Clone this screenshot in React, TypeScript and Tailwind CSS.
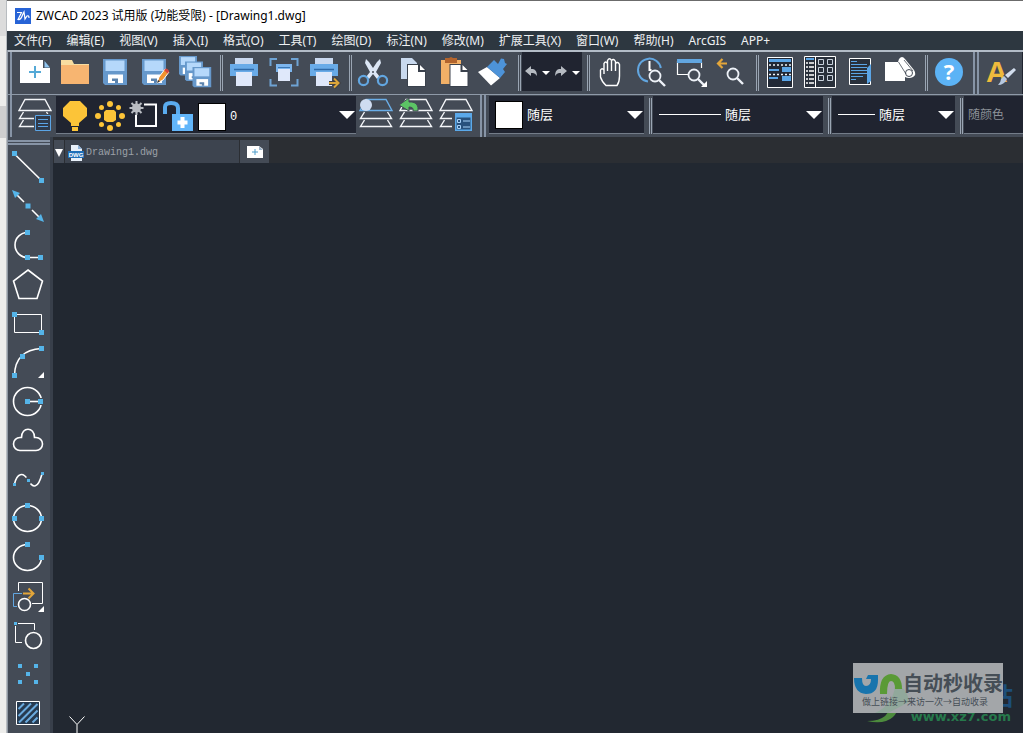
import type { ReactNode } from 'react';

const CJK = "font-['Noto_Sans','Noto_Sans_CJK_SC',sans-serif]";

const menus = [
  '文件(F)', '编辑(E)', '视图(V)', '插入(I)', '格式(O)', '工具(T)', '绘图(D)',
  '标注(N)', '修改(M)', '扩展工具(X)', '窗口(W)', '帮助(H)', 'ArcGIS', 'APP+',
];

interface IconProps {
  children: ReactNode;
}

// Toolbar glyphs are drawn on a 40x42 grid, one per button cell.
function Icon({ children }: IconProps) {
  return (
    <svg className="block h-[42px] w-10" viewBox="0 0 40 42" fill="none" aria-hidden="true">
      {children}
    </svg>
  );
}

function ToolButton({ label, children }: { label: string; children: ReactNode }) {
  return (
    <button type="button" aria-label={label} className="shrink-0 hover:bg-white/10">
      <Icon>{children}</Icon>
    </button>
  );
}

function Separator() {
  return (
    <div className="flex w-[9px] shrink-0 justify-end gap-px py-[3px] pr-px">
      <div className="w-px bg-[#9aa5b3]" />
      <div className="w-px bg-[#9aa5b3]" />
    </div>
  );
}

function Grip() {
  return (
    <div className="flex w-[13px] shrink-0 justify-center gap-0.5">
      <div className="w-0.5 bg-[#8794a6]" />
      <div className="w-0.5 bg-[#8794a6]" />
    </div>
  );
}

function Floppy({ x, y, s = 1 }: { x: number; y: number; s?: number }) {
  return (
    <g transform={`translate(${x} ${y}) scale(${s})`}>
      <path d="M0 0H24V26H2L0 24Z" fill="#6698cb" />
      <path d="M2.500 1.500H21.500V12H2.500Z" fill="#b5d8fb" />
      <path d="M5 15.500H20V24H5Z" fill="#fff" />
      <path d="M9 19.500H15V24H12V22H9Z" fill="#5b83ad" />
    </g>
  );
}

function Printer() {
  return (
    <>
      <path d="M11 6H29V13H11Z" fill="#c9d8ef" />
      <path d="M6 12H34V24H6Z" fill="#69abe8" />
      <path d="M10 17.500H30" stroke="#2f6aa8" strokeWidth="1.500" />
      <path d="M12 20H28V34H12Z" fill="#dfe8fa" />
    </>
  );
}

function FrontPage({ x }: { x: number }) {
  return (
    <g transform={`translate(${x} 13)`}>
      <path d="M-1 -1H12L18 5V22H-1Z" fill="#3a414c" />
      <path d="M0 0H10V7H17V21H0Z" fill="#fff" />
      <path d="M12 0L17 5H12Z" fill="#fff" />
    </g>
  );
}

function Magnifier({ x, y }: { x: number; y: number }) {
  return (
    <g stroke="#eef2f8" strokeWidth="1.8">
      <circle cx={x} cy={y} r="5.500" fill="#444b56" />
      <path d={`M${x + 4} ${y + 4}L${x + 10} ${y + 10}`} strokeWidth="2.400" />
    </g>
  );
}

function Layers({ top = '#f4f6f9' }: { top?: string }) {
  return (
    <g stroke="#f4f6f9" strokeWidth="1.400">
      <path d="M10 4.500H30L36 15.500H4Z" stroke={top} />
      <path d="M8.500 17L4.500 23.500H35.500L31.500 17" />
      <path d="M8.500 25L4.500 31.500H35.500L31.500 25" />
    </g>
  );
}

function FileTools() {
  return (
    <>
      <ToolButton label="新建">
        <path d="M5 8H28V16H35V31H5Z" fill="#fff" />
        <path d="M29.500 9L35 15.500H29.500Z" fill="#8fc4ee" />
        <path d="M20 14V26M14 20H26" stroke="#55a9d6" strokeWidth="2" />
      </ToolButton>
      <ToolButton label="打开">
        <path d="M6 8H17L19 12H34V20H6Z" fill="#f8dda0" />
        <path d="M6 13H34V32H6Z" fill="#f7b571" />
      </ToolButton>
      <ToolButton label="保存">
        <Floppy x={8} y={7} />
      </ToolButton>
      <ToolButton label="另存为">
        <Floppy x={7} y={7} />
        <path d="M22 31L24 25L30 17L34 20L28 28Z" fill="#f0932e" stroke="#fff" />
        <path d="M29 18L31 16.500Q34 17 34 20L32.500 21.500Z" fill="#d8463c" />
        <path d="M22 31L23 28L25 29.500Z" fill="#333" />
      </ToolButton>
      <ToolButton label="全部保存">
        <Floppy x={4} y={4} s={0.75} />
        <Floppy x={10} y={9.500} s={0.75} />
        <Floppy x={17.500} y={15} s={0.78} />
      </ToolButton>
    </>
  );
}

function PrintTools() {
  return (
    <>
      <ToolButton label="打印">
        <Printer />
      </ToolButton>
      <ToolButton label="打印预览">
        <path
          d="M6.500 14V7H13M27 7H33.500V14M33.500 27V33.500H27M13 33.500H6.500V27"
          stroke="#6ea3d4"
          strokeWidth="2"
        />
        <path d="M12 12H28V20H12Z" fill="#7db6ee" />
        <path d="M14 15.500H26" stroke="#3a77b5" />
        <path d="M14 17H26V29H14Z" fill="#dfe8fa" />
      </ToolButton>
      <ToolButton label="发布">
        <Printer />
        <path d="M25 31H34M30 26.500L34.500 31L30 35.500" stroke="#3f4046" strokeWidth="4" />
        <path d="M25 31H34M30 26.500L34.500 31L30 35.500" stroke="#dba63b" strokeWidth="2" />
      </ToolButton>
    </>
  );
}

function EditTools() {
  return (
    <>
      <ToolButton label="剪切">
        <path d="M13 7L16 10L20 16L24 10L27 7L28 11L23 20L27 25L24 27L20 22L16 27L13 25L17 20L12 11Z" fill="#dce6f5" />
        <circle cx="10.500" cy="28.500" r="4.600" stroke="#62a6e0" strokeWidth="2.200" />
        <circle cx="29.500" cy="28.500" r="4.600" stroke="#62a6e0" strokeWidth="2.200" />
        <circle cx="20" cy="20" r="1" fill="#444b56" />
      </ToolButton>
      <ToolButton label="复制">
        <path d="M8 6H19L24 11V27H8Z" fill="#c9d9ee" />
        <FrontPage x={15} />
      </ToolButton>
      <ToolButton label="粘贴">
        <path d="M8 8H28V32H8Z" fill="#f2b067" />
        <path d="M12 6H16L18 5L20 6H24V11H12Z" fill="#b2642d" />
        <FrontPage x={17.500} />
      </ToolButton>
      <ToolButton label="格式刷">
        <path d="M5 20L14 15L27 26L18 33.500Z" fill="#fff" />
        <path d="M14 15L21 8L25 12L28 6.500L31 7L32 11L34 12L30 17L32 20L27 26Z" fill="#4d93d9" />
      </ToolButton>
    </>
  );
}

function HistoryTools() {
  return (
    <div className="flex h-[39px] w-[60px] shrink-0 items-center bg-[#202430]">
      <button type="button" aria-label="放弃" className="flex-1">
        <svg className="block h-4 w-[30px]" viewBox="0 0 30 16" aria-hidden="true">
          <path d="M3 7L9 2V5H11Q15 6 15 12Q13 9 11 9H9V12Z" fill="#b5bac1" />
          <path d="M20 7H28L24 11Z" fill="#fff" />
        </svg>
      </button>
      <button type="button" aria-label="重做" className="flex-1">
        <svg className="block h-4 w-[30px]" viewBox="0 0 30 16" aria-hidden="true">
          <path d="M15 7L9 2V5H7Q3 6 3 12Q5 9 7 9H9V12Z" fill="#b5bac1" />
          <path d="M20 7H28L24 11Z" fill="#fff" />
        </svg>
      </button>
    </div>
  );
}

function ViewTools() {
  return (
    <>
      <ToolButton label="平移">
        <path
          d="M13 22V11.500Q14.500 8.500 16.500 11.500V19M16.500 19V8.500Q18.500 5 20.500 8.500V19M20.500 19V8.500Q22.500 6 24.500 9.500V19M24.500 19V11.500Q27 9 28.500 12.500V24Q28.500 30 26 33.500H15Q10.500 29 9.500 25V18Q11 15.500 13 18"
          stroke="#fff"
          strokeWidth="1.400"
        />
      </ToolButton>
      <ToolButton label="实时缩放">
        <path d="M17 29.500A11.500 11.500 0 1 1 29.800 16" stroke="#62a6e0" strokeWidth="2" />
        <path d="M18.500 9V18H20.500" stroke="#fff" strokeWidth="2" />
        <Magnifier x={24} y={24} />
      </ToolButton>
      <ToolButton label="窗口缩放">
        <path d="M17 22.500H6.500V9M30.500 10V16" stroke="#fff" strokeWidth="1.200" />
        <path d="M6 7H31V11H6Z" fill="#62a6e0" />
        <Magnifier x={23} y={23} />
        <path d="M36 29V35H30Z" fill="#fff" />
      </ToolButton>
      <ToolButton label="缩放上一个">
        <path d="M7 11.500H16M11.500 7L7 11.500L11.500 16" stroke="#e3a63a" strokeWidth="2.200" />
        <Magnifier x={22} y={22} />
      </ToolButton>
    </>
  );
}

function PaletteTools() {
  return (
    <>
      <ToolButton label="特性">
        <path d="M7.500 5.500H32.500V35.500H7.500Z" fill="#222936" stroke="#fff" />
        <path d="M9 7H31V10H9ZM22 15H31V20H22ZM9 17H19V19H9ZM22 24H31V29H22ZM9 25H18V27H9Z" fill="#5ba5e6" />
        <path d="M9 13H31M9 22.500H31" stroke="#eef3f8" strokeWidth="1.500" strokeDasharray="2 2" />
      </ToolButton>
      <ToolButton label="设计中心">
        <path d="M4.500 4.500H35.500V35.500H4.500ZM15.500 4.500V35.500" fill="#29303b" stroke="#fff" />
        <path d="M6 7H14" stroke="#5ba5e6" strokeWidth="2" />
        <path d="M6 11H14M6 15H14M6 19H14M6 23H14M6 27H14M6 31H14" stroke="#fff" strokeWidth="1.500" strokeDasharray="2 1 6" />
        <path
          d="M18.500 7.500H23.500V12.500H18.500ZM27.500 7.500H32.500V12.500H27.500ZM18.500 15.500H23.500V20.500H18.500ZM27.500 15.500H32.500V20.500H27.500ZM18.500 23.500H23.500V28.500H18.500ZM27.500 23.500H32.500V28.500H27.500Z"
          stroke="#c9d2dd"
        />
      </ToolButton>
      <ToolButton label="工具选项板">
        <path d="M9.500 6.500H30.500V32.500H9.500Z" fill="#29303b" stroke="#fff" />
        <path
          d="M11 9.500H17M11 12.500H27M11 15.500H27M11 18.500H27M11 21.500H27M11 24.500H23M11 27.500H16"
          stroke="#5ba5e6"
        />
        <path d="M27 16L31 12V29L27 32Z" fill="#5ba5e6" />
      </ToolButton>
      <ToolButton label="图纸集">
        <path d="M5 10H18L19 7Q22 3 25 7L34 18Q37 23 33 25Q29 27 25 25V29H5Z" fill="#fff" />
        <path d="M18.500 10L26 22M24 8L33 19" stroke="#444b56" strokeWidth="0.800" />
        <circle cx="29" cy="21" r="3.500" stroke="#444b56" />
      </ToolButton>
    </>
  );
}

function StandardToolbar() {
  return (
    <div className="flex overflow-hidden border-t-2 border-[#b3bcc7] bg-[#444b56]">
      <div className="-ml-1.5 flex">
        <Grip />
      </div>
      <FileTools />
      <Separator />
      <PrintTools />
      <Separator />
      <EditTools />
      <Separator />
      <HistoryTools />
      <Separator />
      <ViewTools />
      <Separator />
      <PaletteTools />
      <Separator />
      <ToolButton label="帮助">
        <circle cx="20" cy="20" r="14" fill="#5cb3f6" />
        <text x="20" y="28" textAnchor="middle" fill="#fff" className="font-['Open_Sans'] text-[22px] font-bold">
          ?
        </text>
      </ToolButton>
      <Grip />
      <ToolButton label="文字样式">
        <text x="4" y="30" fill="#efbb3d" className="font-['Liberation_Sans',sans-serif] text-[30px] font-bold">
          A
        </text>
        <path d="M31 14L35 17L26 28L21 24Z" fill="#444b56" />
        <path d="M32 16L34 18L26 26L23 23Z" fill="#d2dded" />
        <path d="M22 24L25 27Q22 33 16 33Q19 30 19 27Z" fill="#b7c8df" />
      </ToolButton>
      <div className="flex-1 bg-[#202430]" />
    </div>
  );
}

function Arrow() {
  return (
    <svg className="pointer-events-none mr-px h-2 w-4 shrink-0" viewBox="0 0 16 8" aria-hidden="true">
      <path d="M0 0H16L8 8Z" fill="#fff" />
    </svg>
  );
}

interface ComboProps {
  label: string;
  value: string;
  className: string;
  children?: ReactNode;
}

function Combo({ label, value, className, children }: ComboProps) {
  return (
    <div
      className={`mt-px flex h-[38px] shrink-0 items-center gap-1 overflow-hidden border-b border-[#747d89] bg-[#202430] pl-1.5 ${className}`}
    >
      {children}
      <select
        aria-label={label}
        className={`min-w-0 flex-1 appearance-none bg-transparent text-[13px] text-white outline-none ${CJK}`}
      >
        <option>{value}</option>
      </select>
      <Arrow />
    </div>
  );
}

function LayerCombo() {
  return (
    <div className="mt-px ml-px flex h-[38px] w-[300px] shrink-0 items-center border-b border-[#747d89] bg-[#202430]">
      <svg className="h-[37px] w-[142px] shrink-0" viewBox="56 96 142 37" fill="none" aria-hidden="true">
        <path d="M70 101H80L87 108V116L79 123V126H71V123L63 116V108ZM72 127H78V131H72Z" fill="#fcc438" />
        <path d="M106 110H114L116 112V120L113 122H107L104 120V112Z" fill="#fcc438" />
        <g fill="#fcc438">
          <circle cx="110" cy="104" r="3" />
          <circle cx="110" cy="128" r="3" />
          <circle cx="98" cy="116" r="3" />
          <circle cx="122" cy="116" r="3" />
          <circle cx="101.500" cy="107.500" r="2.500" />
          <circle cx="118.500" cy="107.500" r="2.500" />
          <circle cx="101.500" cy="124.500" r="2.500" />
          <circle cx="118.500" cy="124.500" r="2.500" />
        </g>
        <path d="M136 104.500H156V126H136Z" stroke="#fff" strokeWidth="2" />
        <path d="M129 101H144V115H129Z" fill="#202430" />
        <circle cx="136.500" cy="108" r="4.500" fill="#b9bcc2" />
        <path d="M136.500 101V115M129.500 108H143.500M131.500 103L141.500 113M141.500 103L131.500 113" stroke="#b9bcc2" strokeWidth="2" />
        <path d="M165 114V107Q165 103 171 103Q178 103 178 108V115" stroke="#5aabee" strokeWidth="4" />
        <path d="M172 114H193V131H172Z" fill="#62b6fa" />
        <path d="M182.500 117V128M177.500 122.500H187.500" stroke="#fff" strokeWidth="4" />
      </svg>
      <div className="mt-1 size-7 shrink-0 border border-black bg-white" />
      <select
        aria-label="图层"
        className="mt-1 ml-1 min-w-0 flex-1 appearance-none bg-transparent font-['Liberation_Mono',monospace] text-xs text-white outline-none"
      >
        <option>0</option>
      </select>
      <Arrow />
    </div>
  );
}

function LayerToolbar() {
  return (
    <div className="flex overflow-hidden border-t border-[#8f9aa8] bg-[#444b56]">
      <div className="-ml-1.5 flex">
        <Grip />
      </div>
      <ToolButton label="图层特性管理器">
        <Layers />
        <path d="M19 19H37V37H19Z" fill="#444b56" />
        <path d="M20.500 20.500H35.500V35.500H20.500Z" fill="#303b4b" stroke="#5ba5e6" />
        <path d="M23 24.500H33M23 28.500H33M23 31.500H33" stroke="#5ba5e6" />
      </ToolButton>
      <LayerCombo />
      <ToolButton label="置为当前图层">
        <Layers top="#6aaee8" />
        <circle cx="10" cy="10" r="6" fill="#cfdcf1" />
      </ToolButton>
      <ToolButton label="上一个图层">
        <Layers />
        <path d="M3 10L13 3V7H16Q23 8 22 16H17Q18 12 13 12V16Z" fill="#5cc465" stroke="#444b56" />
      </ToolButton>
      <ToolButton label="图层状态">
        <Layers />
        <path d="M16 17H37V37H16Z" fill="#444b56" />
        <path d="M19 18H36V36H19Z" fill="#5ba9ea" />
        <path d="M20.500 22.500H34.500V34.500H20.500Z" fill="#29527d" />
        <path d="M21.500 24.500H24.500V27.500H21.500ZM21.500 30.500H24.500V33.500H21.500ZM27 26H34M27 32H34" stroke="#a9d3fa" />
      </ToolButton>
      <Grip />
      <Combo label="颜色" value="随层" className="w-[155px]">
        <div className="size-7 shrink-0 border border-black bg-white" />
      </Combo>
      <Separator />
      <Combo label="线型" value="随层" className="w-[170px]">
        <div className="h-px w-[62px] shrink-0 bg-white" />
      </Combo>
      <Separator />
      <Combo label="线宽" value="随层" className="w-[123px]">
        <div className="h-px w-[37px] shrink-0 bg-white" />
      </Combo>
      <Separator />
      <div className="mt-px flex h-[38px] min-w-[60px] flex-1 items-center overflow-hidden border-b border-[#747d89] bg-[#202430] pl-1">
        <select
          aria-label="打印样式"
          disabled
          className={`w-full appearance-none bg-transparent text-xs text-[#8b9097] opacity-100 ${CJK}`}
        >
          <option>随颜色</option>
        </select>
      </div>
    </div>
  );
}

function Dot({ x, y, r = 2.5 }: { x: number; y: number; r?: number }) {
  return <rect x={x - r} y={y - r} width={r * 2} height={r * 2} fill="#55b4e8" stroke="none" />;
}

const drawTools: { label: string; icon: ReactNode }[] = [
  { label: '直线', icon: <><path d="M6 5.500L33.500 32.500" /><Dot x={6.5} y={5.5} /><Dot x={33.5} y={32.5} /></> },
  {
    label: '构造线',
    icon: (
      <>
        <path d="M8 7L32 31" />
        <path d="M4 3L12 6L7 11ZM36 35L28 32L33 27Z" fill="#55b4e8" stroke="none" />
        <path d="M16 15L24 23" stroke="#444b56" strokeWidth="3" />
        <Dot x={20} y={19} />
      </>
    ),
  },
  {
    label: '多段线',
    icon: (
      <>
        <path d="M19.500 6.500A12.500 12.500 0 0 0 19.500 31.500H32.500" />
        <Dot x={19.5} y={6.5} /><Dot x={19.5} y={31.5} /><Dot x={32.5} y={31.5} />
      </>
    ),
  },
  { label: '正多边形', icon: <path d="M20 5L34.500 16L29 33.500H11L5.500 16Z" /> },
  { label: '矩形', icon: <><path d="M6.500 10.500H33.500V28.500H6.500Z" strokeWidth="1" /><Dot x={6.5} y={10.5} /><Dot x={33.5} y={28.5} /></> },
  {
    label: '圆弧',
    icon: (
      <>
        <path d="M6.500 32.500Q7 7 33.500 5.500" />
        <path d="M36 29V35H30Z" fill="#fff" stroke="none" />
        <Dot x={6.5} y={32.5} /><Dot x={14.5} y={13.5} /><Dot x={33.5} y={5.5} />
      </>
    ),
  },
  {
    label: '圆',
    icon: <><circle cx="19.500" cy="19.500" r="14" /><path d="M32.500 16V23" stroke="#444b56" strokeWidth="5" /><path d="M19.500 19.500H32" /><Dot x={19.5} y={19.5} /><Dot x={32.5} y={19.5} /></>,
  },
  { label: '修订云线', icon: <path d="M12 29.500A6.500 6.500 0 0 1 12 16.500H13.500C13.500 5.500 26.500 5.500 26.500 16.500H28A6.500 6.500 0 0 1 28 29.500Z" /> },
  {
    label: '样条曲线',
    icon: (
      <>
        <path d="M6.500 24C9 13 15 11.500 20 20S30 29 34 14" />
        <path d="M18 18L23 23" stroke="#444b56" strokeWidth="4" />
        <Dot x={6.5} y={24.5} r={1.5} /><Dot x={20.5} y={20.5} r={1.5} /><Dot x={34.5} y={13.5} r={1.5} />
      </>
    ),
  },
  {
    label: '椭圆',
    icon: <><ellipse cx="19.500" cy="19.500" rx="14" ry="13" /><Dot x={19.5} y={6.5} /><Dot x={6.5} y={19.5} /><Dot x={33.5} y={19.5} /></>,
  },
  { label: '椭圆弧', icon: <><path d="M19.500 6.500A14 13 0 1 0 33.500 19.500" /><Dot x={19.5} y={6.5} /><Dot x={33.5} y={19.5} /></> },
  {
    label: '插入块',
    icon: (
      <>
        <path d="M10.500 14V5.500H34.500V26.500H24" strokeWidth="1" />
        <path d="M14 16.500H5.500V29.500H9" stroke="#62a6e0" strokeWidth="1" />
        <path d="M15 16.500H25M20.500 11.500L25.500 16.500L20.500 21.500" stroke="#e3a63a" strokeWidth="2" />
        <circle cx="16.500" cy="27.500" r="6" />
        <path d="M36 29V35H30Z" fill="#fff" stroke="none" />
      </>
    ),
  },
  {
    label: '创建块',
    icon: (
      <>
        <path d="M10 7.500H26.500V14M7.500 10V26.500H14" strokeWidth="1" />
        <circle cx="25.500" cy="24.500" r="8" />
        <Dot x={7.5} y={7.5} r={1.5} />
      </>
    ),
  },
  {
    label: '点',
    icon: <><Dot x={12} y={11} r={2} /><Dot x={28} y={11} r={2} /><Dot x={20} y={19} r={2} /><Dot x={12} y={27} r={2} /><Dot x={28} y={27} r={2} /></>,
  },
  {
    label: '图案填充',
    icon: (
      <>
        <path d="M8.500 7.500H31.500V30.500H8.500Z" fill="#263a50" strokeWidth="1" />
        <path d="M10.500 15L16 9.500M10.500 22L23 9.500M11 28.500L29.500 10M17.500 28.500L29.500 16.500M24.500 28.500L29.500 23.500" stroke="#6aaade" strokeWidth="2" />
      </>
    ),
  },
];

function DrawToolbar() {
  return (
    <aside className="flex w-[45px] shrink-0 flex-col overflow-hidden border-r-[3px] border-[#383f4a] bg-[#444b56]">
      <div className="flex h-[11px] shrink-0 flex-col gap-px pt-[3px]">
        <div className="h-0.5 bg-[#8794a6]" />
        <div className="h-0.5 bg-[#8794a6]" />
      </div>
      {drawTools.map((tool) => (
        <button key={tool.label} type="button" aria-label={tool.label} className="shrink-0 hover:bg-white/10">
          <svg className="block h-[39px] w-[42px]" viewBox="0 0 42 39" fill="none" stroke="#fff" strokeWidth="1.600" aria-hidden="true">
            {tool.icon}
          </svg>
        </button>
      ))}
    </aside>
  );
}

function FileTabs() {
  return (
    <div className="flex h-[26px] gap-px bg-[#2b2e33] pt-[3px] pl-px">
      <button type="button" aria-label="文档列表" className="flex w-2.5 items-center justify-center bg-[#444b56] pt-0.5">
        <svg className="h-2 w-2" viewBox="0 0 8 8" aria-hidden="true">
          <path d="M0 0H8L4 8Z" fill="#fff" />
        </svg>
      </button>
      <button
        type="button"
        className="flex w-[174px] items-center gap-0.5 bg-[#3d444f] pt-0.5 pl-[3px] font-['Liberation_Mono',monospace] text-[10px] text-[#9ba0a7]"
      >
        <svg className="h-4 w-4 shrink-0" viewBox="0 0 16 16" aria-hidden="true">
          <path d="M3 0H10L14 4V16H3Z" fill="#e9f1fa" />
          <path d="M10 0V4H14Z" fill="#8fb4dc" />
          <path d="M0 6H16V13H0Z" fill="#1f6fb8" />
          <text x="8" y="12" textAnchor="middle" fill="#fff" className="font-['Liberation_Sans'] text-[6px] font-bold">
            DWG
          </text>
        </svg>
        Drawing1.dwg
      </button>
      <button type="button" aria-label="新建文档" className="flex w-[29px] items-center justify-center bg-[#444b56]">
        <svg className="h-3 w-4" viewBox="0 0 16 12" aria-hidden="true">
          <path d="M0 0H12L16 3V12H0Z" fill="#fff" />
          <path d="M12 0V4H16Z" fill="#9fb4c8" />
          <path d="M8 3V9M5 6H11" stroke="#4d9cca" />
        </svg>
      </button>
    </div>
  );
}

function Watermark() {
  return (
    <div className="absolute right-0 bottom-0 h-[70px] w-[170px]">
      <svg className="absolute bottom-2 left-2 h-10 w-[50px]" viewBox="0 0 50 40" aria-hidden="true">
        <path d="M6 36Q31 36 30 14Q42 22 32 32Q23 40 6 36Z" fill="#4d8b3d" />
      </svg>
      <span className={`absolute right-2.5 bottom-[22px] text-[24px] leading-[30px] font-bold text-[#1d4e79] ${CJK}`}>站</span>
      <span className="absolute right-3 bottom-2 font-['DejaVu_Sans',sans-serif] text-[13px] leading-4 font-bold text-[#26794b]">
        www.xz7.com
      </span>
      <div className="absolute top-0 left-0 h-[50px] w-[150px] bg-[#a3a6a9]">
        <svg className="absolute inset-0 h-full w-full" viewBox="0 0 150 50" fill="none" aria-hidden="true">
          <path d="M42 23Q54 23 56 39L35 50H22Q40 42 42 23Z" fill="#91a89b" />
          <path d="M1 15H9Q9 23 13 23Q18 23 18 16H13L15 12H25V17Q25 31 13 31Q1 30 1 15Z" fill="#1874ad" />
          <path d="M27 31Q26 12 38 11Q49 12 49 26H42Q42 18 38 18Q34 18 34 31Z" fill="#5a9a36" />
        </svg>
        <div className={`relative flex flex-col text-[#464e56] ${CJK}`}>
          <span className="mt-2 self-end text-[20px] leading-[25px] font-bold whitespace-nowrap">自动秒收录</span>
          <span className="pl-[9px] text-[9px] leading-3 whitespace-nowrap">做上链接→来访一次→自动收录</span>
        </div>
      </div>
    </div>
  );
}

export default function App() {
  return (
    <div className={`flex h-screen overflow-hidden bg-[#ededeb] ${CJK}`}>
      <div className="flex w-[7px] shrink-0 flex-col border-r border-[#b8bcc0]">
        <div className="h-9 bg-[#dcdcdc]" />
        <div className="h-[70px]" />
        <div className="h-8 bg-[#cfcfcf]" />
      </div>
      <div className="flex min-w-0 flex-1 flex-col">
        <header className="flex h-[31px] shrink-0 items-center gap-[5px] border-t border-[#6b6b6b] bg-white pl-2 text-xs text-black">
          <svg className="h-4 w-4" viewBox="0 0 16 16" fill="none" aria-hidden="true">
            <path d="M0 0H16V16H0Z" fill="#2763d6" />
            <path d="M2 4.500H6.500L3 11.500Q6 12 7.500 7L9 4L10 11L12 8Q14 7 14 10" stroke="#fff" strokeWidth="1.200" />
          </svg>
          <h1 className="whitespace-nowrap">ZWCAD 2023 试用版 (功能受限) - [Drawing1.dwg]</h1>
        </header>
        <nav className="flex h-[19px] shrink-0 items-center gap-[15px] overflow-hidden bg-[#2d3740] pl-[7px] text-xs text-[#eef0f2]">
          {menus.map((menu) => (
            <button key={menu} type="button" className="shrink-0 whitespace-nowrap">
              {menu}
            </button>
          ))}
        </nav>
        <div className="flex min-h-0 flex-1 flex-col border-l border-[#8f98a3]">
          <StandardToolbar />
          <LayerToolbar />
          <div className="flex min-h-0 flex-1">
            <DrawToolbar />
            <main className="relative flex min-w-0 flex-1 flex-col bg-[#222831]">
              <FileTabs />
              <svg className="mt-auto ml-4 block h-[17px] w-4 shrink-0" viewBox="0 0 16 17" fill="none" aria-hidden="true">
                <path d="M0.500 0.500L8 8.500L15.500 0.500M8 8.500V17" stroke="#fff" />
              </svg>
              <Watermark />
            </main>
          </div>
        </div>
      </div>
    </div>
  );
}
